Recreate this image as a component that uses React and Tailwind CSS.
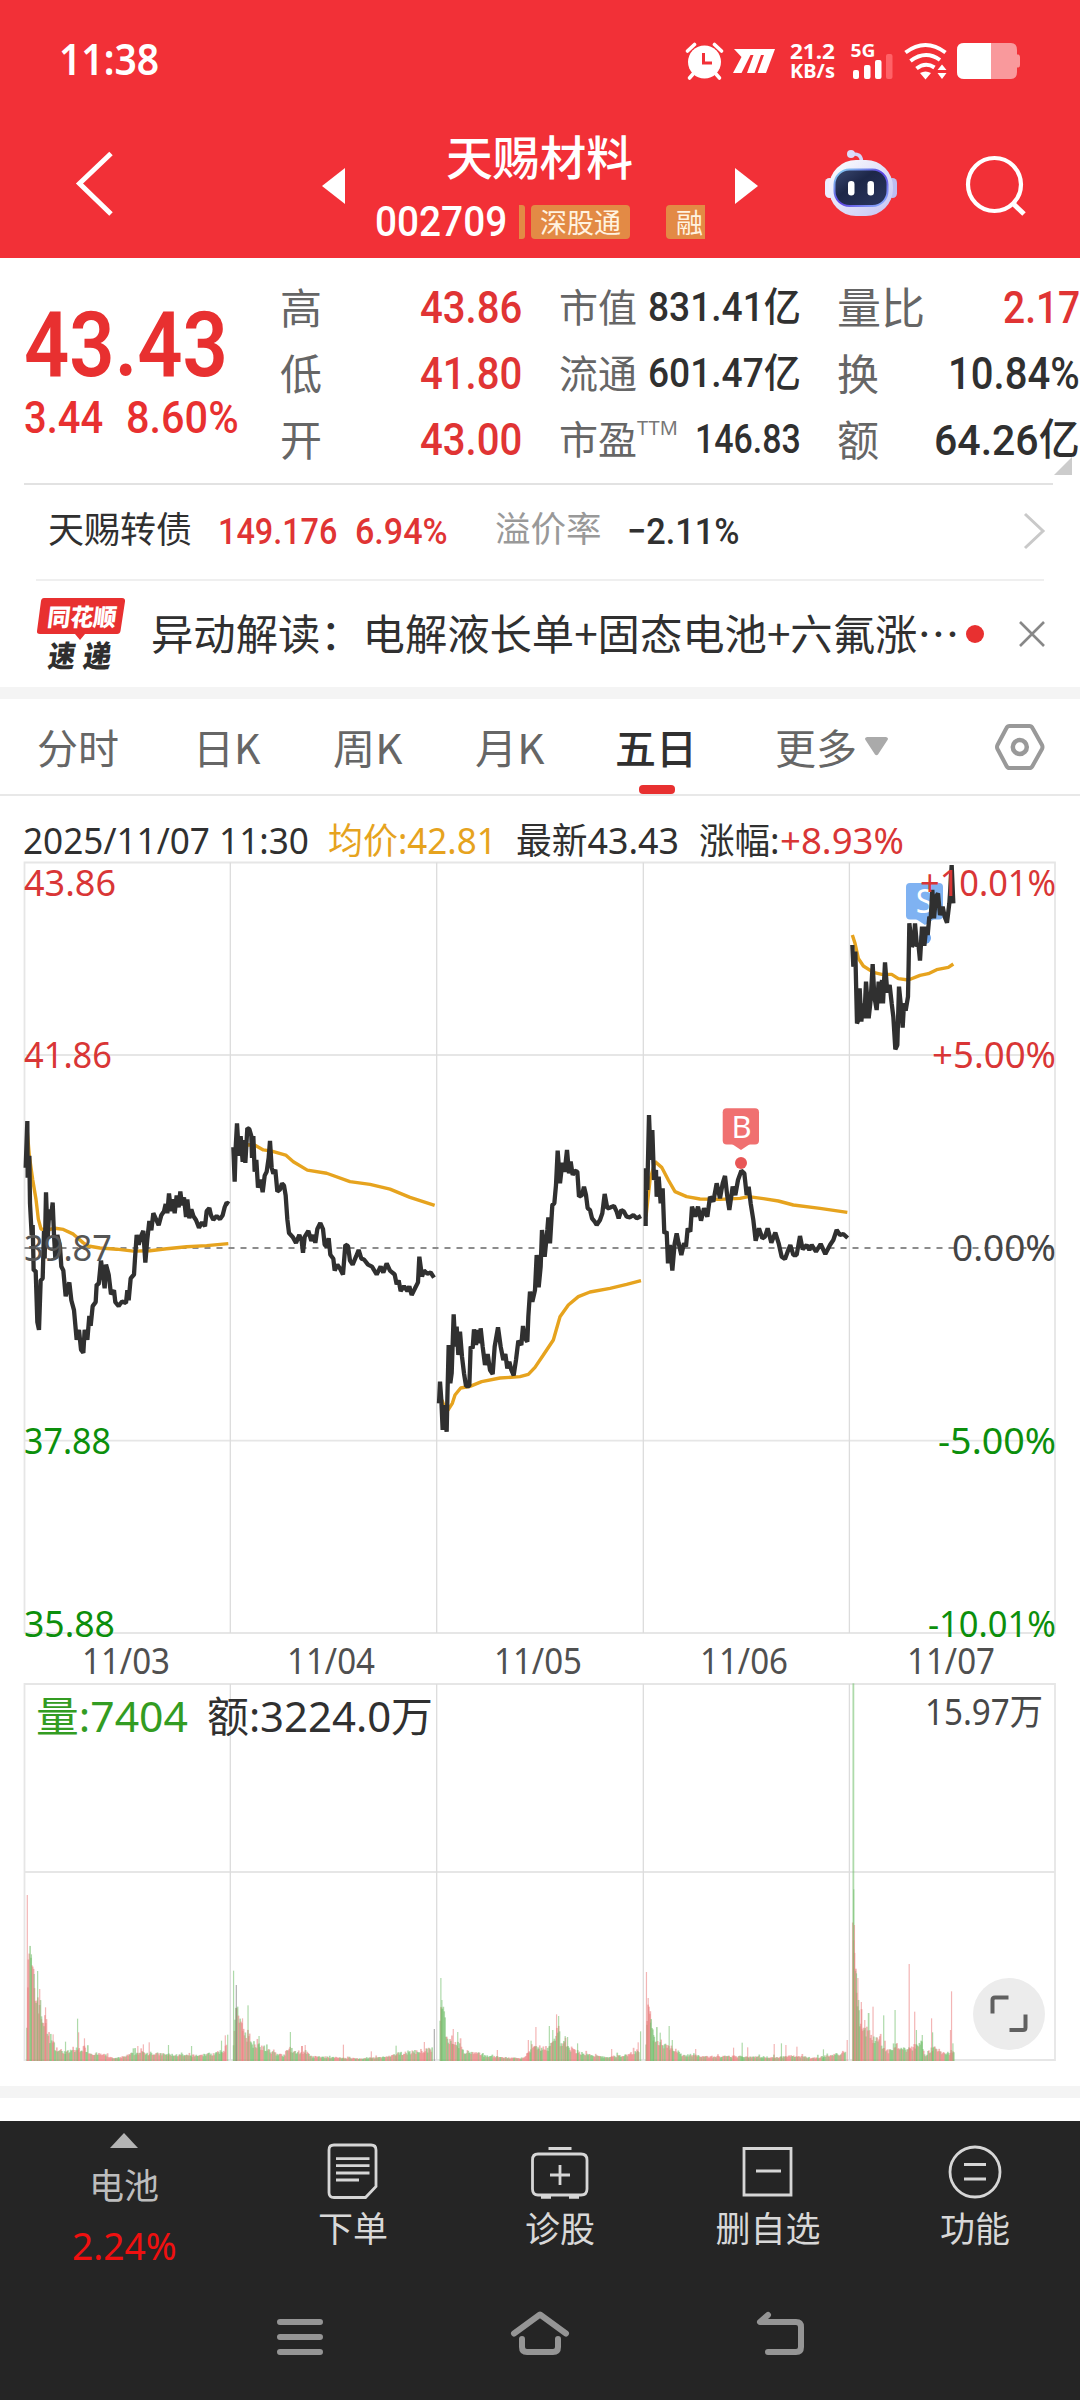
import { useLayoutEffect, useRef } from "react";

/* A single line of text condensed or widened to the width of its box. */
function Fit({ className, children }) {
  const box = useRef(null);
  const inner = useRef(null);
  useLayoutEffect(() => {
    const natural = inner.current.offsetWidth;
    if (natural) inner.current.style.transform = `scaleX(${box.current.clientWidth / natural})`;
  }, []);
  return (
    <span ref={box} className={`block shrink-0 whitespace-nowrap leading-none ${className}`}>
      <span ref={inner} className="inline-block origin-left">{children}</span>
    </span>
  );
}

const DIN = "font-['Roboto','Noto_Sans_CJK_SC',sans-serif]";

function StatusBar() {
  return (
    <div className="flex h-[120px] items-center">
      <Fit className="mb-[3px] ml-[59px] w-[100px] text-[43px] font-semibold font-['Noto_Sans',sans-serif]">11:38</Fit>
      <svg className="ml-[526px] mt-[1px] h-[40px] w-[94px] shrink-0" viewBox="685 40 94 40" fill="none">
        <circle cx="704.5" cy="61" r="16.5" fill="#fff" />
        <path d="M687.5 50 L694.5 43.5 M721.5 50 L714.5 43.5" stroke="#fff" strokeWidth="3.6" strokeLinecap="round" />
        <path d="M693 73 L689.5 77 M716 73 L719.5 77" stroke="#fff" strokeWidth="3.6" strokeLinecap="round" />
        <path d="M703.5 52 V62 H712" stroke="#f23037" strokeWidth="3" />
        <path d="M734 48 H775 L766 72 H757.500 L764 54 H761 L754.500 72 H747 L753.500 54 H750.500 L741.500 72 H733 L741.500 56 Z" fill="#fff" />
      </svg>
      <div className="ml-[11px] flex flex-col font-['Noto_Sans',sans-serif] font-bold">
        <Fit className="w-[45px] text-[22px] leading-[20px]">21.2</Fit>
        <Fit className="w-[45px] text-[20px] leading-[20px]">KB/s</Fit>
      </div>
      <svg className="ml-[15px] mt-[1px] h-[40px] w-[175px] shrink-0" viewBox="850 40 175 40" fill="none">
        <text x="850.500" y="56" fontSize="18.500" fontWeight="700" fill="#fff" textLength="25" lengthAdjust="spacingAndGlyphs" fontFamily="Noto Sans, sans-serif">5G</text>
        <rect x="853" y="69" width="6" height="9" rx="2" fill="#fff" />
        <rect x="864" y="64" width="6.500" height="14" rx="2" fill="#fff" />
        <rect x="875" y="59" width="6.500" height="19" rx="2" fill="#fff" />
        <rect x="886" y="53" width="6.500" height="25" rx="2" fill="#ff6267" />
        <path d="M905.500 51.500 Q925.500 36.500 945.500 51.500" stroke="#fff" strokeWidth="4" />
        <path d="M910.500 60 Q925.500 48.500 940 59" stroke="#fff" strokeWidth="4" />
        <path d="M916.500 67.500 Q925.500 60.500 934.500 66.500" stroke="#fff" strokeWidth="4" />
        <path d="M920 72 Q925.500 69 931 72 L925.500 78.500 Z" fill="#fff" />
        <path d="M937.500 69 L942 63.500 L946.500 69 Z M937.500 72 L942 78 L946.500 72 Z" fill="#fff" />
        <path d="M964 42 H1011 Q1017 42 1017 49 V53.500 H1018.500 Q1020 54 1020 56 V64 Q1020 66 1018.500 66.500 H1017 V71 Q1017 78 1011 78 H964 Q957 78 957 71 V49 Q957 42 964 42 Z" fill="#f9999c" />
        <path d="M991 42 V78 H964 Q957 78 957 71 V49 Q957 42 964 42 Z" fill="#fff" />
      </svg>
    </div>
  );
}

function RobotIcon() {
  return (
    <svg className="h-[70px] w-[76px] shrink-0" viewBox="823 148 76 70" fill="none">
      <defs>
        <linearGradient id="shell" x1="0" y1="0" x2="1" y2="1">
          <stop offset="0" stopColor="#fff" /><stop offset="1" stopColor="#c3c3f3" />
        </linearGradient>
        <linearGradient id="face" x1="0" y1="0" x2="1" y2="1">
          <stop offset="0" stopColor="#3c4a72" /><stop offset=".4" stopColor="#1d2748" /><stop offset="1" stopColor="#2b3660" />
        </linearGradient>
        <linearGradient id="rim" x1="0" y1="0" x2="1" y2="1">
          <stop offset="0" stopColor="#8de0f5" /><stop offset=".5" stopColor="#5a3fe0" /><stop offset="1" stopColor="#8fb8ff" />
        </linearGradient>
      </defs>
      <path d="M852 154 Q861 153 861.500 161" stroke="#d5d5f8" strokeWidth="3.500" />
      <circle cx="851" cy="154" r="4" fill="#dcdcfa" />
      <rect x="825" y="178" width="9" height="20" rx="4.500" fill="#ededff" />
      <rect x="888" y="178" width="9" height="20" rx="4.500" fill="#bdbdf0" />
      <rect x="829" y="160" width="64" height="56" rx="27" fill="url(#shell)" />
      <rect x="834.500" y="169.500" width="53" height="36.500" rx="15" fill="url(#face)" stroke="url(#rim)" strokeWidth="2" />
      <rect x="848" y="181" width="6.500" height="14.500" rx="3.200" fill="#fff" />
      <rect x="867.500" y="181" width="6.500" height="14.500" rx="3.200" fill="#fff" />
    </svg>
  );
}

function TitleBar() {
  return (
    <div className="flex h-[138px] items-start">
      <svg className="ml-[74px] mt-[28px] h-[72px] w-[44px] shrink-0" viewBox="74 148 44 72" fill="none">
        <path d="M111 153.500 L79.500 183.500 L111 214" stroke="#fff" strokeWidth="5" />
      </svg>
      <svg className="ml-[204px] mt-[48px] h-[36px] w-[23px] shrink-0" viewBox="0 0 23 36"><path d="M23 0 V36 L0 18 Z" fill="#fff" /></svg>
      <div className="ml-[29px] flex w-[332px] flex-col">
        <Fit className="ml-[72px] mt-[11px] h-[51px] w-[187px] text-[47px] font-medium font-['Noto_Sans_CJK_SC',sans-serif]">天赐材料</Fit>
        <div className="mt-[23px] flex h-[34px] items-center text-[#fff3e0]">
          <Fit className={`ml-[1px] w-[132px] text-[42px] font-medium text-white ${DIN}`}>002709</Fit>
          <div className="ml-[12px] h-[34px] w-[6px] shrink-0 rounded-r-[3px] bg-[#e38a45]" />
          <div className="ml-[6px] flex h-[34px] w-[99px] shrink-0 items-center justify-center rounded-[4px] bg-[#e38a45]">
            <Fit className="w-[81px] pb-[2px] text-[27px] font-['Noto_Sans_CJK_SC',sans-serif]">深股通</Fit>
          </div>
          <div className="ml-[36px] flex h-[34px] w-[39px] shrink-0 items-center overflow-hidden rounded-l-[4px] bg-[#e38a45] pl-[10px]">
            <span className="pb-[2px] text-[27px] leading-none font-['Noto_Sans_CJK_SC',sans-serif]">融</span>
          </div>
        </div>
      </div>
      <svg className="ml-[29px] mt-[48px] h-[36px] w-[23px] shrink-0" viewBox="0 0 23 36"><path d="M0 0 V36 L23 18 Z" fill="#fff" /></svg>
      <div className="ml-[65px] mt-[28px]"><RobotIcon /></div>
      <svg className="ml-[65px] mt-[34px] h-[64px] w-[64px] shrink-0" viewBox="964 154 64 64" fill="none">
        <circle cx="994.500" cy="184.500" r="26.500" stroke="#fff" strokeWidth="4.200" />
        <path d="M1013 203.500 L1024 214" stroke="#fff" strokeWidth="5" />
      </svg>
    </div>
  );
}

const KAI = "mb-[5px] font-normal font-['Noto_Sans_CJK_SC',sans-serif] text-[#666]";

function Quote() {
  return (
    <section className="relative flex h-[225px] font-medium">
      <div className={`ml-[24px] w-[256px] text-[#e83030] ${DIN}`}>
        <Fit className="mt-[42px] w-[204px] text-[91px] font-semibold">43.43</Fit>
        <div className="mt-[5px] flex">
          <Fit className="w-[79px] text-[44px]">3.44</Fit>
          <Fit className="ml-[23px] w-[113px] text-[44px]">8.60%</Fit>
        </div>
      </div>
      <div className="mt-[17px] grid h-[198px] w-[242px] grid-rows-3">
        {[["高", "43.86"], ["低", "41.80"], ["开", "43.00"]].map(([k, v]) => (
          <div key={k} className="flex items-center justify-between">
            <span className={`text-[42px] leading-none ${KAI}`}>{k}</span>
            <Fit className={`w-[102px] text-[44px] text-[#e03434] ${DIN}`}>{v}</Fit>
          </div>
        ))}
      </div>
      <div className="ml-[37px] mt-[17px] grid h-[198px] w-[242px] grid-rows-3">
        <div className="flex items-center justify-between">
          <span className={`text-[39px] leading-none ${KAI}`}>市值</span>
          <Fit className={`w-[153px] text-[40px] text-[#303030] ${DIN}`}>831.41亿</Fit>
        </div>
        <div className="flex items-center justify-between">
          <span className={`text-[39px] leading-none ${KAI}`}>流通</span>
          <Fit className={`w-[153px] text-[40px] text-[#303030] ${DIN}`}>601.47亿</Fit>
        </div>
        <div className="flex items-center justify-between">
          <span className="flex items-start">
            <span className={`text-[39px] leading-none ${KAI}`}>市盈</span>
            <Fit className="w-[41px] text-[20px] font-normal text-[#777] font-['Noto_Sans',sans-serif]">TTM</Fit>
          </span>
          <Fit className={`w-[106px] text-[40px] text-[#303030] ${DIN}`}>146.83</Fit>
        </div>
      </div>
      <div className="ml-[36px] mt-[17px] grid h-[198px] w-[243px] grid-rows-3">
        <div className="flex items-center justify-between">
          <Fit className={`w-[88px] text-[43px] ${KAI}`}>量比</Fit>
          <Fit className={`w-[77px] text-[44px] text-[#e03434] ${DIN}`}>2.17</Fit>
        </div>
        <div className="flex items-center justify-between">
          <span className={`text-[42px] leading-none ${KAI}`}>换</span>
          <Fit className={`w-[132px] text-[44px] text-[#303030] ${DIN}`}>10.84%</Fit>
        </div>
        <div className="flex items-center justify-between">
          <span className={`text-[42px] leading-none ${KAI}`}>额</span>
          <Fit className={`w-[146px] text-[43px] text-[#303030] ${DIN}`}>64.26亿</Fit>
        </div>
      </div>
      <svg className="absolute right-[8px] top-[199px] h-[18px] w-[18px]" viewBox="0 0 18 18"><path d="M18 0 V18 H0 Z" fill="#ccc" /></svg>
    </section>
  );
}

function BondRow() {
  return (
    <section className={`ml-[24px] mr-[27px] flex h-[96px] items-center border-t-2 border-[#e2e2e2] pb-[2px] ${DIN}`}>
      <Fit className="ml-[24px] w-[144px] text-[36px] text-[#303030]">天赐转债</Fit>
      <Fit className="ml-[26px] w-[119px] text-[37px] font-medium text-[#e03434]">149.176</Fit>
      <Fit className="ml-[18px] w-[93px] text-[37px] font-medium text-[#e03434]">6.94%</Fit>
      <Fit className="ml-[47px] w-[107px] text-[35.500px] text-[#999]">溢价率</Fit>
      <Fit className="ml-[25px] w-[112px] text-[37px] font-medium text-[#303030]">−2.11%</Fit>
      <svg className="ml-[284px] h-[38px] w-[24px] shrink-0" viewBox="0 0 24 38" fill="none"><path d="M2 2 L20 19 L2 36" stroke="#c9c9c9" strokeWidth="3" /></svg>
    </section>
  );
}

function NewsRow() {
  return (
    <section className="ml-[36px] mr-[36px] flex h-[108px] items-center border-t-2 border-[#efefef]">
      <svg className="h-[76px] w-[90px] shrink-0" viewBox="36 595 90 76">
        <path d="M44 597 H122 Q125.500 597 125 600.500 L120.500 630 Q120 633 117 633 H85 L80 639 L75 633 H40 Q36.500 633 37 630 L41 600 Q41.500 597 44 597 Z" fill="#e83030" />
        <g fontFamily="Noto Sans CJK SC, sans-serif" fontWeight="900">
          <text transform="translate(46.500 624.500) skewX(-7)" fontSize="24" textLength="69" lengthAdjust="spacingAndGlyphs" fill="#fff">同花顺</text>
          <text transform="translate(47 665.500) skewX(-8)" fontSize="30" fill="#2e2e2e" textLength="27" lengthAdjust="spacingAndGlyphs">速</text>
          <text transform="translate(82 665.500) skewX(-8)" fontSize="30" fill="#2e2e2e" textLength="28" lengthAdjust="spacingAndGlyphs">递</text>
        </g>
      </svg>
      <Fit className="mb-[4px] ml-[25px] w-[809px] text-[42px] text-[#303030] font-['Noto_Sans_CJK_SC',sans-serif]">异动解读：电解液长单+固态电池+六氟涨⋯</Fit>
      <div className="ml-[6px] h-[18px] w-[18px] shrink-0 rounded-full bg-[#e83030]" />
      <svg className="ml-[35px] h-[26px] w-[26px] shrink-0" viewBox="0 0 26 26" fill="none"><path d="M1 1 L25 25 M25 1 L1 25" stroke="#888" strokeWidth="2.600" /></svg>
    </section>
  );
}

function PeriodTabs() {
  return (
    <nav className="flex h-[97px] items-center border-b-2 border-[#e8e8e8] text-[41px] text-[#666] font-['Noto_Sans_CJK_SC',sans-serif]">
      <Fit className="ml-[37px] w-[82px]">分时</Fit>
      <Fit className="ml-[74px] w-[68px]">日K</Fit>
      <Fit className="ml-[72px] w-[70px]">周K</Fit>
      <Fit className="ml-[72px] w-[70px]">月K</Fit>
      <div className="relative ml-[70px] flex h-full items-center text-[#303030]">
        <Fit className="w-[82px] font-medium">五日</Fit>
        <div className="absolute bottom-0 left-[24px] h-[9px] w-[36px] rounded-[4px] bg-[#e83030]" />
      </div>
      <Fit className="ml-[78px] w-[82px]">更多</Fit>
      <svg className="ml-[8px] h-[19px] w-[23px] shrink-0" viewBox="0 0 23 19"><path d="M2 0 H21 Q24 1 22.500 3 L13 17.500 Q11.500 19 10 17.500 L.500 3 Q-1 1 2 0 Z" fill="#aaa" /></svg>
      <svg className="ml-[106px] h-[48px] w-[52px] shrink-0" viewBox="0 0 52 48" fill="none" stroke="#999">
        <path d="M15.500 3 H35.500 Q37.500 3 38.500 5 L48 22 Q49 24 48 26 L38.500 43 Q37.500 45 35.500 45 H15.500 Q13.500 45 12.500 43 L3.500 26 Q2.500 24 3.500 22 L12.500 5 Q13.500 3 15.500 3 Z" strokeWidth="4" />
        <circle cx="25.800" cy="24" r="7" strokeWidth="4.500" />
      </svg>
    </nav>
  );
}

/* Intraday price and average-price traces, one pair per trading day. */
const TRACES = [
  {
    at: "translate(0 800) scale(.33333 .39541)",
    avg: "82,840 88,900 98,960 108,1010 115,1060 123,1085 140,1088 165,1083 190,1086 220,1098 250,1120 265,1128 300,1133 350,1136 400,1141 450,1140 500,1135 560,1130 620,1127 685,1122",
    price: "77,930 82,812 83,955 88,900 90,1020 95,1100 98,1075 101,1190 107,1190 112,1320 117,1340 122,1215 128,1210 132,1090 134,1160 138,992 143,1110 148,1035 152,1062 158,1018 162,1100 166,1160 172,1100 180,1130 184,1180 190,1190 197,1255 208,1220 214,1265 222,1290 230,1365 237,1340 243,1390 250,1398 254,1340 262,1365 268,1305 272,1330 278,1280 287,1270 290,1225 296,1225 303,1165 314,1235 318,1175 326,1200 333,1250 342,1240 346,1270 356,1280 366,1268 378,1272 382,1240 386,1265 392,1210 402,1200 405,1160 410,1100 416,1125 422,1105 430,1090 436,1170 442,1110 448,1065 454,1088 460,1045 468,1060 476,1075 484,1050 492,1040 497,1022 502,1045 507,995 513,1040 518,1010 524,1045 530,1000 536,1030 541,990 546,1025 552,1005 558,1055 562,1010 568,1058 574,1035 580,1052 588,1062 597,1082 606,1068 615,1078 620,1040 628,1032 633,1050 640,1062 650,1052 660,1060 668,1050 674,1030 680,1018 687,1022",
  },
  {
    at: "translate(0 800) scale(.33333 .39541)",
    avg: "700,885 720,880 745,872 765,873 790,885 815,888 857,898 880,915 922,936 980,944 1050,965 1110,972 1170,984 1230,1005 1304,1025",
    price: "700,878 704,965 707,880 711,818 717,900 722,850 728,915 733,860 736,918 742,830 748,832 754,850 756,905 760,850 764,940 769,910 774,980 782,960 788,992 794,950 800,940 806,905 810,862 815,930 820,945 826,935 832,990 840,985 846,970 852,975 857,1000 862,1060 867,1095 878,1105 888,1120 898,1100 905,1115 909,1145 914,1105 925,1090 934,1115 941,1100 946,1120 952,1085 961,1070 969,1085 974,1125 980,1130 986,1108 991,1150 1000,1160 1004,1190 1012,1175 1020,1185 1029,1200 1036,1125 1044,1128 1050,1165 1058,1175 1068,1155 1076,1138 1084,1160 1092,1162 1104,1175 1116,1180 1130,1200 1142,1180 1150,1195 1160,1172 1170,1190 1184,1200 1190,1225 1196,1215 1202,1242 1212,1230 1222,1242 1228,1230 1235,1252 1245,1235 1254,1220 1258,1155 1266,1205 1272,1190 1282,1198 1292,1195 1302,1208",
  },
  {
    at: "translate(420 1080) scale(.33333)",
    avg: "66,960 78,995 84,990 97,970 105,945 122,924 150,919 185,905 240,894 300,890 325,883 345,862 370,825 400,780 420,710 445,675 475,650 510,636 570,625 620,613 663,602",
    price: "57,970 60,905 64,960 68,1050 72,975 80,1055 82,960 86,795 91,910 95,880 101,703 106,800 110,740 115,825 120,755 126,830 132,880 138,918 148,918 152,800 158,805 162,748 168,795 174,750 178,790 182,745 188,800 195,855 203,822 210,870 218,882 224,800 234,742 242,800 250,840 256,822 262,865 268,845 274,870 281,886 288,840 295,782 304,795 309,738 315,775 322,785 325,710 330,635 337,665 345,630 350,525 356,622 362,560 366,450 374,530 382,450 385,412 390,490 397,375 403,370 408,315 413,212 420,310 427,248 434,275 441,210 447,280 452,245 458,285 464,272 472,275 477,350 486,345 492,320 498,345 503,385 510,390 516,415 524,425 530,435 540,420 547,400 554,342 562,385 572,382 582,378 590,395 596,415 604,390 612,395 620,410 630,412 640,405 650,415 663,408",
  },
  {
    at: "translate(420 1080) scale(.33333)",
    avg: "678,410 690,300 705,245 725,262 745,300 765,335 800,350 840,357 900,358 960,355 985,350 1030,356 1075,363 1120,375 1200,385 1282,397",
    price: "677,438 678,265 682,330 687,105 692,240 697,150 702,300 708,270 710,350 716,290 722,370 728,325 733,460 740,455 744,550 750,495 757,572 764,490 770,460 776,490 784,525 792,490 798,500 803,445 811,455 816,380 826,410 834,380 843,422 852,385 862,410 870,350 880,365 890,310 900,355 908,310 915,288 922,350 928,390 938,320 946,345 954,300 964,272 973,280 980,345 986,320 992,370 1000,420 1007,482 1017,445 1027,475 1035,470 1043,445 1054,488 1066,458 1076,490 1085,530 1095,537 1103,515 1111,495 1120,525 1130,525 1140,468 1148,508 1160,495 1168,510 1175,495 1188,515 1202,492 1216,522 1230,495 1240,480 1250,450 1260,465 1270,462 1283,474",
  },
  {
    at: "translate(820 800) scale(.33333)",
    avg: "97,405 105,430 115,475 130,498 160,517 185,523 215,523 235,536 265,540 300,526 325,521 350,509 385,502 400,492",
    price: "97,435 100,500 106,455 111,670 115,660 119,565 124,665 129,610 133,655 138,545 146,655 152,600 158,492 163,590 170,630 176,545 181,610 186,540 189,610 195,487 202,578 209,555 215,610 220,650 226,748 232,735 237,560 243,620 248,683 252,610 257,632 264,590 266,490 268,370 276,440 281,430 285,370 291,440 295,430 300,482 306,380 313,437 319,380 323,405 328,350 332,355 337,270 342,355 348,290 354,280 360,345 368,320 374,350 381,368 388,310 391,265 395,195 400,310",
  },
];

const LABELS = [
  [24, 895.5, 92, "43.86", "#d93636"], [24, 1068, 88, "41.86", "#d93636"], [24, 1260.5, 88, "39.87", "#555"],
  [24, 1453.5, 87, "37.88", "#0c8f0c"], [24, 1636.5, 91, "35.88", "#0c8f0c"],
  [920, 895.5, 136, "+10.01%", "#d93636"], [932, 1067.5, 124, "+5.00%", "#d93636"], [952, 1260.5, 104, "0.00%", "#444"],
  [938, 1453.5, 118, "-5.00%", "#0c8f0c"], [928, 1636.5, 128, "-10.01%", "#0c8f0c"],
];

const DATES = [[82, "11/03"], [287, "11/04"], [494, "11/05"], [700, "11/06"], [907, "11/07"]];
const COLS = [230.3, 436.7, 643.3, 849.4];

function Label({ x, y, w, fill, size = 36, children }) {
  return (
    <text x={x} y={y} fill={fill} fontSize={size} textLength={w} lengthAdjust="spacingAndGlyphs" fontFamily="Noto Sans, Noto Sans CJK SC, sans-serif">{children}</text>
  );
}

function PriceChart() {
  return (
    <svg className="block h-[822px] w-full" viewBox="0 861 1080 822" fill="none">
      <g stroke="#e6e6e6" strokeWidth="1.800">
        <path d="M24.500 862.500 H1055 V1633 H24.500 Z M24.500 1055 H1055 M24.500 1440.700 H1055" />
        {COLS.map((x) => <path key={x} d={`M${x} 862.500 V1633`} strokeWidth="1.300" stroke="#dcdcdc" />)}
      </g>
      <path d="M24.500 1248 H1055" stroke="#8c8c8c" strokeWidth="1.800" strokeDasharray="6 6" />
      <rect x="906" y="883" width="37" height="36.500" rx="4" fill="#7fb2f2" />
      <path d="M916 919 H934 L925 925 Z" fill="#7fb2f2" />
      <circle cx="925" cy="938" r="6" fill="#6ba3ec" />
      <text x="924.500" y="913" textAnchor="middle" fontSize="32" fill="#fff" fontFamily="Noto Sans, sans-serif">S</text>
      {TRACES.map((t) => (
        <g key={t.price} transform={t.at} strokeLinejoin="bevel">
          <polyline points={t.avg} stroke="#e6a31e" strokeWidth="3.400" vectorEffect="non-scaling-stroke" />
          <polyline points={t.price} stroke="#303030" strokeWidth="4.300" vectorEffect="non-scaling-stroke" />
        </g>
      ))}
      <rect x="722.700" y="1108.300" width="36.300" height="36.300" rx="4" fill="#f07070" />
      <path d="M732 1144 H750 L741 1150 Z" fill="#f07070" />
      <circle cx="741" cy="1163" r="6" fill="#e85656" />
      <text x="741.500" y="1138" textAnchor="middle" fontSize="31" fill="#fff" fontFamily="Noto Sans, sans-serif">B</text>
      {LABELS.map(([x, y, w, s, c]) => <Label key={s} x={x} y={y} w={w} fill={c}>{s}</Label>)}
      {DATES.map(([x, s]) => <Label key={s} x={x} y={1673.5} w={88} fill="#505050">{s}</Label>)}
    </svg>
  );
}

/* Volume outline per session as [time, level], with single-minute peaks as [time, level, colour]. */
const SESSIONS = [
  {
    env: [[76, 1250], [80, 1050], [90, 1120], [100, 1190], [110, 1200], [118, 1250], [130, 1270], [140, 1310], [150, 1330], [165, 1350], [190, 1358], [220, 1350], [245, 1345], [260, 1360], [300, 1365], [330, 1376], [360, 1370], [380, 1362], [400, 1358], [450, 1362], [550, 1368], [620, 1362], [645, 1355], [656, 1340]],
    peaks: [[79, 885, "r"], [91, 1063, "g"], [99, 1122, "g"], [109, 1113, "g"], [115, 1167, "r"], [132, 1222, "r"], [154, 1303, "r"], [190, 1325, "g"], [225, 1256, "g"], [228, 1297, "r"], [245, 1315, "r"], [400, 1338, "r"], [416, 1333, "r"], [433, 1327, "r"], [489, 1335, "g"], [556, 1338, "g"], [643, 1322, "g"], [654, 1306, "r"], [661, 1304, "g"]],
  },
  {
    env: [[676, 1335], [680, 1230], [690, 1250], [700, 1300], [720, 1310], [730, 1330], [750, 1335], [780, 1355], [820, 1367], [840, 1345], [850, 1358], [885, 1355], [900, 1370], [950, 1372], [1050, 1376], [1130, 1370], [1160, 1360], [1210, 1355], [1254, 1350]],
    peaks: [[678, 1112, "g"], [686, 1155, "n"], [704, 1255, "r"], [720, 1216, "g"], [752, 1308, "g"], [843, 1296, "g"], [876, 1338, "r"], [886, 1335, "r"], [997, 1334, "r"], [1078, 1354, "r"], [1150, 1337, "g"], [1232, 1326, "r"], [1261, 1287, "n"]],
  },
  {
    env: [[1276, 1285], [1280, 1200], [1290, 1270], [1297, 1320], [1310, 1320], [1330, 1335], [1345, 1358], [1380, 1360], [1410, 1368], [1450, 1372], [1510, 1376], [1532, 1360], [1550, 1345], [1568, 1345], [1590, 1350], [1610, 1310], [1620, 1280], [1625, 1325], [1650, 1345], [1680, 1358], [1720, 1368], [1760, 1372], [1820, 1365], [1854, 1350]],
    peaks: [[1280, 1134, "g"], [1283, 1200, "g"], [1316, 1287, "r"], [1329, 1296, "g"], [1444, 1350, "r"], [1534, 1320, "r"], [1542, 1322, "g"], [1556, 1281, "r"], [1595, 1278, "g"], [1605, 1290, "g"], [1616, 1243, "r"], [1622, 1248, "g"], [1641, 1308, "g"], [1648, 1311, "g"], [1677, 1330, "g"], [1776, 1347, "r"], [1853, 1327, "r"], [1860, 1294, "g"]],
  },
  {
    env: [[1874, 1338], [1877, 1240], [1886, 1260], [1895, 1310], [1910, 1325], [1930, 1335], [1945, 1340], [1960, 1350], [1975, 1365], [2010, 1366], [2040, 1370], [2180, 1370], [2250, 1372], [2300, 1368], [2360, 1374], [2400, 1368], [2440, 1362], [2455, 1352]],
    peaks: [[1877, 1116, "r"], [1882, 1194, "r"], [1889, 1268, "g"], [1898, 1305, "g"], [1917, 1298, "g"], [1943, 1278, "g"], [1952, 1320, "g"], [2020, 1347, "r"], [2130, 1343, "r"], [2155, 1328, "g"], [2171, 1342, "r"], [2248, 1332, "r"], [2269, 1330, "g"], [2282, 1335, "r"], [2314, 1340, "r"], [2391, 1348, "g"], [2460, 1320, "r"]],
  },
  {
    env: [[2474, 915], [2479, 980], [2483, 1140], [2492, 1240], [2500, 1280], [2520, 1300], [2540, 1320], [2560, 1335], [2580, 1355], [2600, 1330], [2612, 1350], [2640, 1345], [2660, 1340], [2675, 1330], [2685, 1365], [2705, 1345], [2720, 1350], [2740, 1362], [2768, 1358]],
    peaks: [[2477, 250, "g"], [2479, 868, "g"], [2481, 975, "r"], [2487, 1120, "g"], [2491, 1134, "r"], [2501, 1206, "r"], [2511, 1260, "r"], [2535, 1220, "r"], [2566, 1246, "g"], [2599, 1230, "g"], [2640, 1092, "r"], [2656, 1235, "r"], [2661, 1290, "g"], [2678, 1305, "g"], [2705, 1255, "r"], [2708, 1297, "g"], [2760, 1290, "r"], [2763, 1174, "r"], [2767, 1330, "g"]],
  },
];

const INK = { r: "#ea7f7f", g: "#74c06c", n: "#777" };

function volumeBars() {
  let seed = 7;
  const rand = () => ((seed = (seed * 16807) % 2147483647) / 2147483647);
  const bars = [];
  for (const { env, peaks } of SESSIONS) {
    for (let i = 0; i < env.length - 1; i++) {
      const [x0, y0] = env[i];
      const [x1, y1] = env[i + 1];
      for (let x = x0; x < x1; x += 2.5) {
        const level = y0 + ((y1 - y0) * (x - x0)) / (x1 - x0);
        const h = ((1383 - level) / 3) * (0.75 + rand() * 0.5 + (rand() > 0.94 ? 0.5 : 0));
        bars.push([x / 2.904, h, rand() > 0.48 ? "r" : "g", 1.7]);
      }
    }
    for (const [x, y, c] of peaks) bars.push([x / 2.904 - 0.5, (1383 - y) / 3, c, y === 250 ? 1.8 : 1.2]);
  }
  return bars;
}

const BARS = volumeBars();

function VolumeChart() {
  return (
    <div className="relative">
      <svg className="block h-[403px] w-full" viewBox="0 1683 1080 403" fill="none">
        <path d="M24.500 1684 H1055 V2060 H24.500 Z M24.500 1872 H1055" stroke="#e6e6e6" strokeWidth="1.800" />
        {COLS.map((x) => <path key={x} d={`M${x} 1684 V2060`} strokeWidth="1.300" stroke="#dcdcdc" />)}
        {BARS.map(([x, h, c, w], i) => <rect key={i} x={x} y={2061 - h} width={w} height={h} fill={INK[c]} opacity=".58" />)}
        <Label x={36} y={1731.5} w={152} size={42} fill="#339c22">量:7404</Label>
        <Label x={207} y={1731.5} w={226} size={42} fill="#303030">额:3224.0万</Label>
        <Label x={925} y={1725} w={118} size={36} fill="#484848">15.97万</Label>
      </svg>
      <div className="absolute left-[973px] top-[295px] flex h-[72px] w-[72px] items-center justify-center rounded-full bg-[#ececec]">
        <svg className="h-[38px] w-[38px]" viewBox="0 0 38 38" fill="none"><path d="M2.500 18.500 V5 Q2.500 2.500 5 2.500 H18.500 M19.500 35 H33 Q35.500 35 35.500 32.500 V19.500" stroke="#606060" strokeWidth="4" /></svg>
      </div>
    </div>
  );
}

function ChartReadout() {
  return (
    <div className="flex h-[65px] items-center pt-[24px] text-[36px] text-[#303030] font-['Noto_Sans','Noto_Sans_CJK_SC',sans-serif]">
      <Fit className="ml-[23px] w-[286px]">2025/11/07 11:30</Fit>
      <Fit className="ml-[19px] w-[169px] text-[#e6a31e]">均价:42.81</Fit>
      <Fit className="ml-[19px] w-[163px]">最新43.43</Fit>
      <Fit className="ml-[20px] w-[81px]">涨幅:</Fit>
      <Fit className="w-[124px] text-[#d93636]">+8.93%</Fit>
    </div>
  );
}

function Action({ className, label, children }) {
  return (
    <div className={`flex w-[120px] shrink-0 flex-col items-center ${className}`}>
      <svg className="mt-[20px] h-[60px] w-[60px]" viewBox="0 0 60 60" fill="none" stroke="#d6d6d6" strokeWidth="2.800">{children}</svg>
      <span className="mt-[8px] text-[35px] leading-none text-[#d8d8d8] font-['Noto_Sans_CJK_SC',sans-serif]">{label}</span>
    </div>
  );
}

function BottomBar() {
  return (
    <footer className="h-[279px] bg-[#252525]">
      <div className="flex h-[170px]">
        <div className="ml-[64px] flex w-[120px] shrink-0 flex-col items-center">
          <svg className="mt-[12px] h-[15px] w-[28px]" viewBox="0 0 28 15"><path d="M14 0 L28 15 H0 Z" fill="#b4b4b4" /></svg>
          <span className="mt-[18px] text-[35px] leading-none text-[#bdbdbd] font-['Noto_Sans_CJK_SC',sans-serif]">电池</span>
          <Fit className="mt-[24px] w-[105px] text-[39px] text-[#f01010] font-['Noto_Sans',sans-serif]">2.24%</Fit>
        </div>
        <Action className="ml-[109px]" label="下单">
          <path d="M11 4 H48 Q53 4 53 9 V45.500 L42.500 56.500 H11 Q6 56.500 6 51.500 V9 Q6 4 11 4 Z" />
          <path d="M13 17.700 H46.500 M13 24.700 H46.500 M13 32 H46.500 M13 39 H36" />
        </Action>
        <Action className="ml-[87px]" label="诊股">
          <path d="M18.500 7.500 H41.500" strokeWidth="3" />
          <path d="M8 13 H51 Q57 13 57 19 V48 Q57 54 51 54 H8 Q2.500 54 2.500 48 V19 Q2.500 13 8 13 Z" />
          <path d="M30 24 V44 M20 34 H40" />
          <path d="M11 56 H21 M39 56 H49" strokeWidth="3.500" />
        </Action>
        <Action className="ml-[88px]" label="删自选">
          <path d="M6 7.500 H53 V54 H6 Z M18 30 H43" />
        </Action>
        <Action className="ml-[87px]" label="功能">
          <circle cx="30" cy="31" r="25" /><path d="M19 23.500 H41 M19 38 H41" />
        </Action>
      </div>
      <svg className="ml-[270px] block h-[80px] w-[540px]" viewBox="270 2291 540 80" fill="none" stroke="#959595" strokeWidth="6" strokeLinecap="round" strokeLinejoin="round">
        <g transform="translate(0 -1)">
          <path d="M280 2323 H320 M280 2338 H320 M280 2353 H320" />
          <path d="M514 2334.500 L540 2315.500 L566 2334.500 M522 2340 V2348 Q522 2353 527 2353 H553 Q558 2353 558 2348 V2340" />
          <path d="M768 2316 L760 2323 H796 Q801 2323 801 2328 V2348 Q801 2353 796 2353 H768" />
        </g>
      </svg>
    </footer>
  );
}

export default function App() {
  return (
    <main className="h-[2400px] w-[1080px] overflow-hidden bg-white">
      <header className="h-[258px] bg-[#f23037] text-white">
        <StatusBar />
        <TitleBar />
      </header>
      <Quote />
      <BondRow />
      <NewsRow />
      <div className="h-[12px] bg-[#f4f4f4]" />
      <PeriodTabs />
      <ChartReadout />
      <PriceChart />
      <VolumeChart />
      <div className="mb-[23px] h-[12px] bg-[#f4f4f4]" />
      <BottomBar />
    </main>
  );
}
